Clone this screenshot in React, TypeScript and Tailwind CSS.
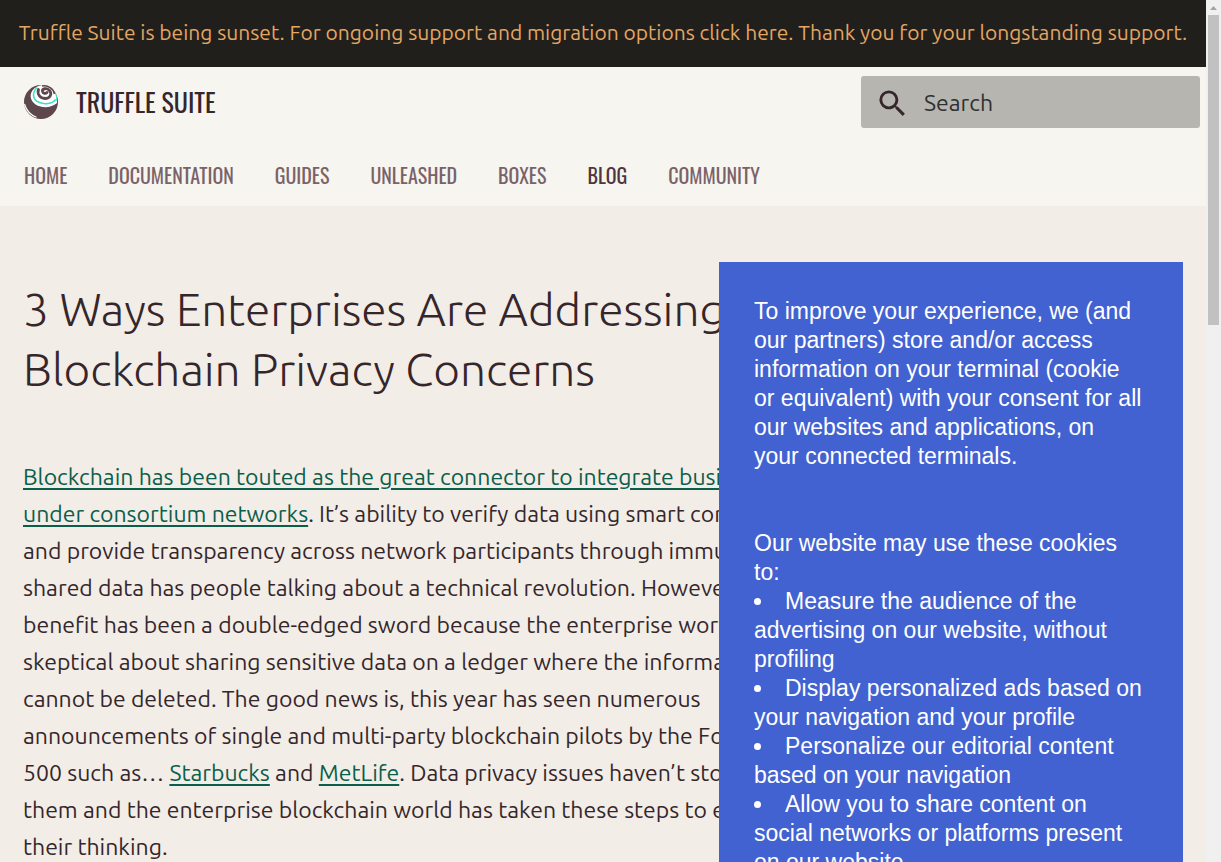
import { MdSearch } from "react-icons/md";

const navItems = ["Home", "Documentation", "Guides", "Unleashed", "Boxes", "Blog", "Community"];

const purposes = [
  "Measure the audience of the advertising on our website, without profiling",
  "Display personalized ads based on your navigation and your profile",
  "Personalize our editorial content based on your navigation",
  "Allow you to share content on social networks or platforms present on our website",
];

function Logo() {
  return (
    <svg viewBox="0 0 36 36" className="size-9" aria-hidden="true">
      <circle cx="18" cy="18" r="17" fill="#5e464d" />
      <path d="M17 1.500C8 4 5.500 12 9.500 17.500c5 7 18 7.500 24.500 1.500C35 11 30 2 20 1Z" fill="#fff" />
      <path d="M14 3.500c-5.500 5.500-4 12.500 1.500 14.500 6 3 13.500 2 17.500-2.500" fill="none" stroke="#3fe0c5" strokeWidth="1.600" />
      <path d="M29 5c4 3.500 5 7.500 4.500 11.500" fill="none" stroke="#3fe0c5" strokeWidth="1" />
      <path d="M19 2c6-1 11.500 2.500 12.500 8" fill="none" stroke="#5e464d" strokeWidth="1.600" />
      <path d="M15.500 5.500c-1.500 4.500 1 8.500 6.500 9 5 0 7.500-4.500 4.500-8-3-3-7.500-2-7 1 .5 2 3 2.500 4.500 1" fill="none" stroke="#5e464d" strokeWidth="2.800" strokeLinecap="round" />
      <path d="M1.500 20c2 7 6 11 12 13.300" fill="none" stroke="#fff" strokeWidth="1.200" />
    </svg>
  );
}

function CookieNotice() {
  return (
    <aside aria-label="Cookie consent" className="absolute top-[262px] right-[23px] w-[464px] bg-[#4262d1] py-[35px] pr-[39px] pl-[35px] font-['Liberation_Sans',sans-serif] text-[23px] leading-[29px] text-white">
      <p>
        To improve your experience, we (and our partners) store and/or access information on your terminal (cookie or equivalent) with your consent for all our websites and applications, on your connected terminals.
      </p>
      <p className="mt-[58px]">Our website may use these cookies to:</p>
      <ul>
        {purposes.map((purpose) => (
          <li key={purpose}>
            <span className="mr-6 mb-[3px] inline-block size-[7px] rounded-full bg-white align-middle" />
            {purpose}
          </li>
        ))}
      </ul>
    </aside>
  );
}

function Scrollbar() {
  return (
    <div aria-hidden="true" className="flex w-[15px] shrink-0 flex-col items-center bg-[#f0f0f0]">
      <svg viewBox="0 0 15 15" className="size-[15px] shrink-0">
        <path d="M4 10 7.500 6 11 10Z" fill="#a3a3a3" />
      </svg>
      <div className="h-[310px] w-[11px] bg-[#c1c1c1]" />
    </div>
  );
}

const linkClass = "text-[#0a5e4b] underline decoration-2 underline-offset-3";

export default function App() {
  return (
    <div className="flex h-screen overflow-hidden bg-[#f2ede7] font-['Ubuntu','Noto_Sans',sans-serif] text-[#35262b]">
      <div className="relative min-w-0 flex-1 overflow-hidden">
        <div className="flex h-[67px] items-center justify-center bg-[#211f1c] pb-[2px] text-[21px] whitespace-nowrap text-[#e4a663]">
          <p>Truffle Suite is being sunset. For ongoing support and migration options click <a href="#sunset">here</a>. Thank you for your longstanding support.</p>
        </div>
        <header className="bg-[#f6f5f0] font-['Oswald','Roboto',sans-serif] uppercase">
          <div className="flex h-[70px] items-center justify-between pr-[6px] pl-[23px]">
            <a href="#home" className="flex items-center gap-[17px] text-[26px]">
              <Logo />
              <span className="leading-9">Truffle Suite</span>
            </a>
            <label className="flex h-[52px] w-[339px] items-center gap-[14px] rounded-[3px] bg-[#b6b5b0] pt-[2px] pl-[14px] font-['Ubuntu','Noto_Sans',sans-serif] normal-case">
              <MdSearch className="size-[35px] shrink-0" aria-hidden="true" />
              <input type="search" aria-label="Search" placeholder="Search" className="min-w-0 flex-1 bg-transparent text-[23px] outline-none placeholder:text-[#303030]" />
            </label>
          </div>
          <nav className="flex h-[69px] items-center gap-[41px] pt-[6px] pl-6 text-[20px] text-[#7a6268]">
            {navItems.map((item) => (
              <a key={item} href={`#${item.toLowerCase()}`} className={item === "Blog" ? "text-[#4f363d]" : ""}>
                {item}
              </a>
            ))}
          </nav>
        </header>
        <main className="px-[23px] pt-[73px] whitespace-nowrap">
          <h1 className="text-[46px] leading-[60px] font-light">
            3 Ways Enterprises Are Addressing<br />
            Blockchain Privacy Concerns
          </h1>
          <p className="mt-[59px] text-[23px] leading-[37px]">
            <a href="#connector" className={linkClass}>
              Blockchain has been touted as the great connector to integrate business<br />
              under consortium networks
            </a>
            . It’s ability to verify data using smart contracts<br />
            and provide transparency across network participants through immutable<br />
            shared data has people talking about a technical revolution. However, this<br />
            benefit has been a double-edged sword because the enterprise world is<br />
            skeptical about sharing sensitive data on a ledger where the information<br />
            cannot be deleted. The good news is, this year has seen numerous<br />
            announcements of single and multi-party blockchain pilots by the Fortune<br />
            500 such as… <a href="#starbucks" className={linkClass}>Starbucks</a> and <a href="#metlife" className={linkClass}>MetLife</a>. Data privacy issues haven’t stopped<br />
            them and the enterprise blockchain world has taken these steps to evolve<br />
            their thinking.
          </p>
        </main>
        <CookieNotice />
      </div>
      <Scrollbar />
    </div>
  );
}
